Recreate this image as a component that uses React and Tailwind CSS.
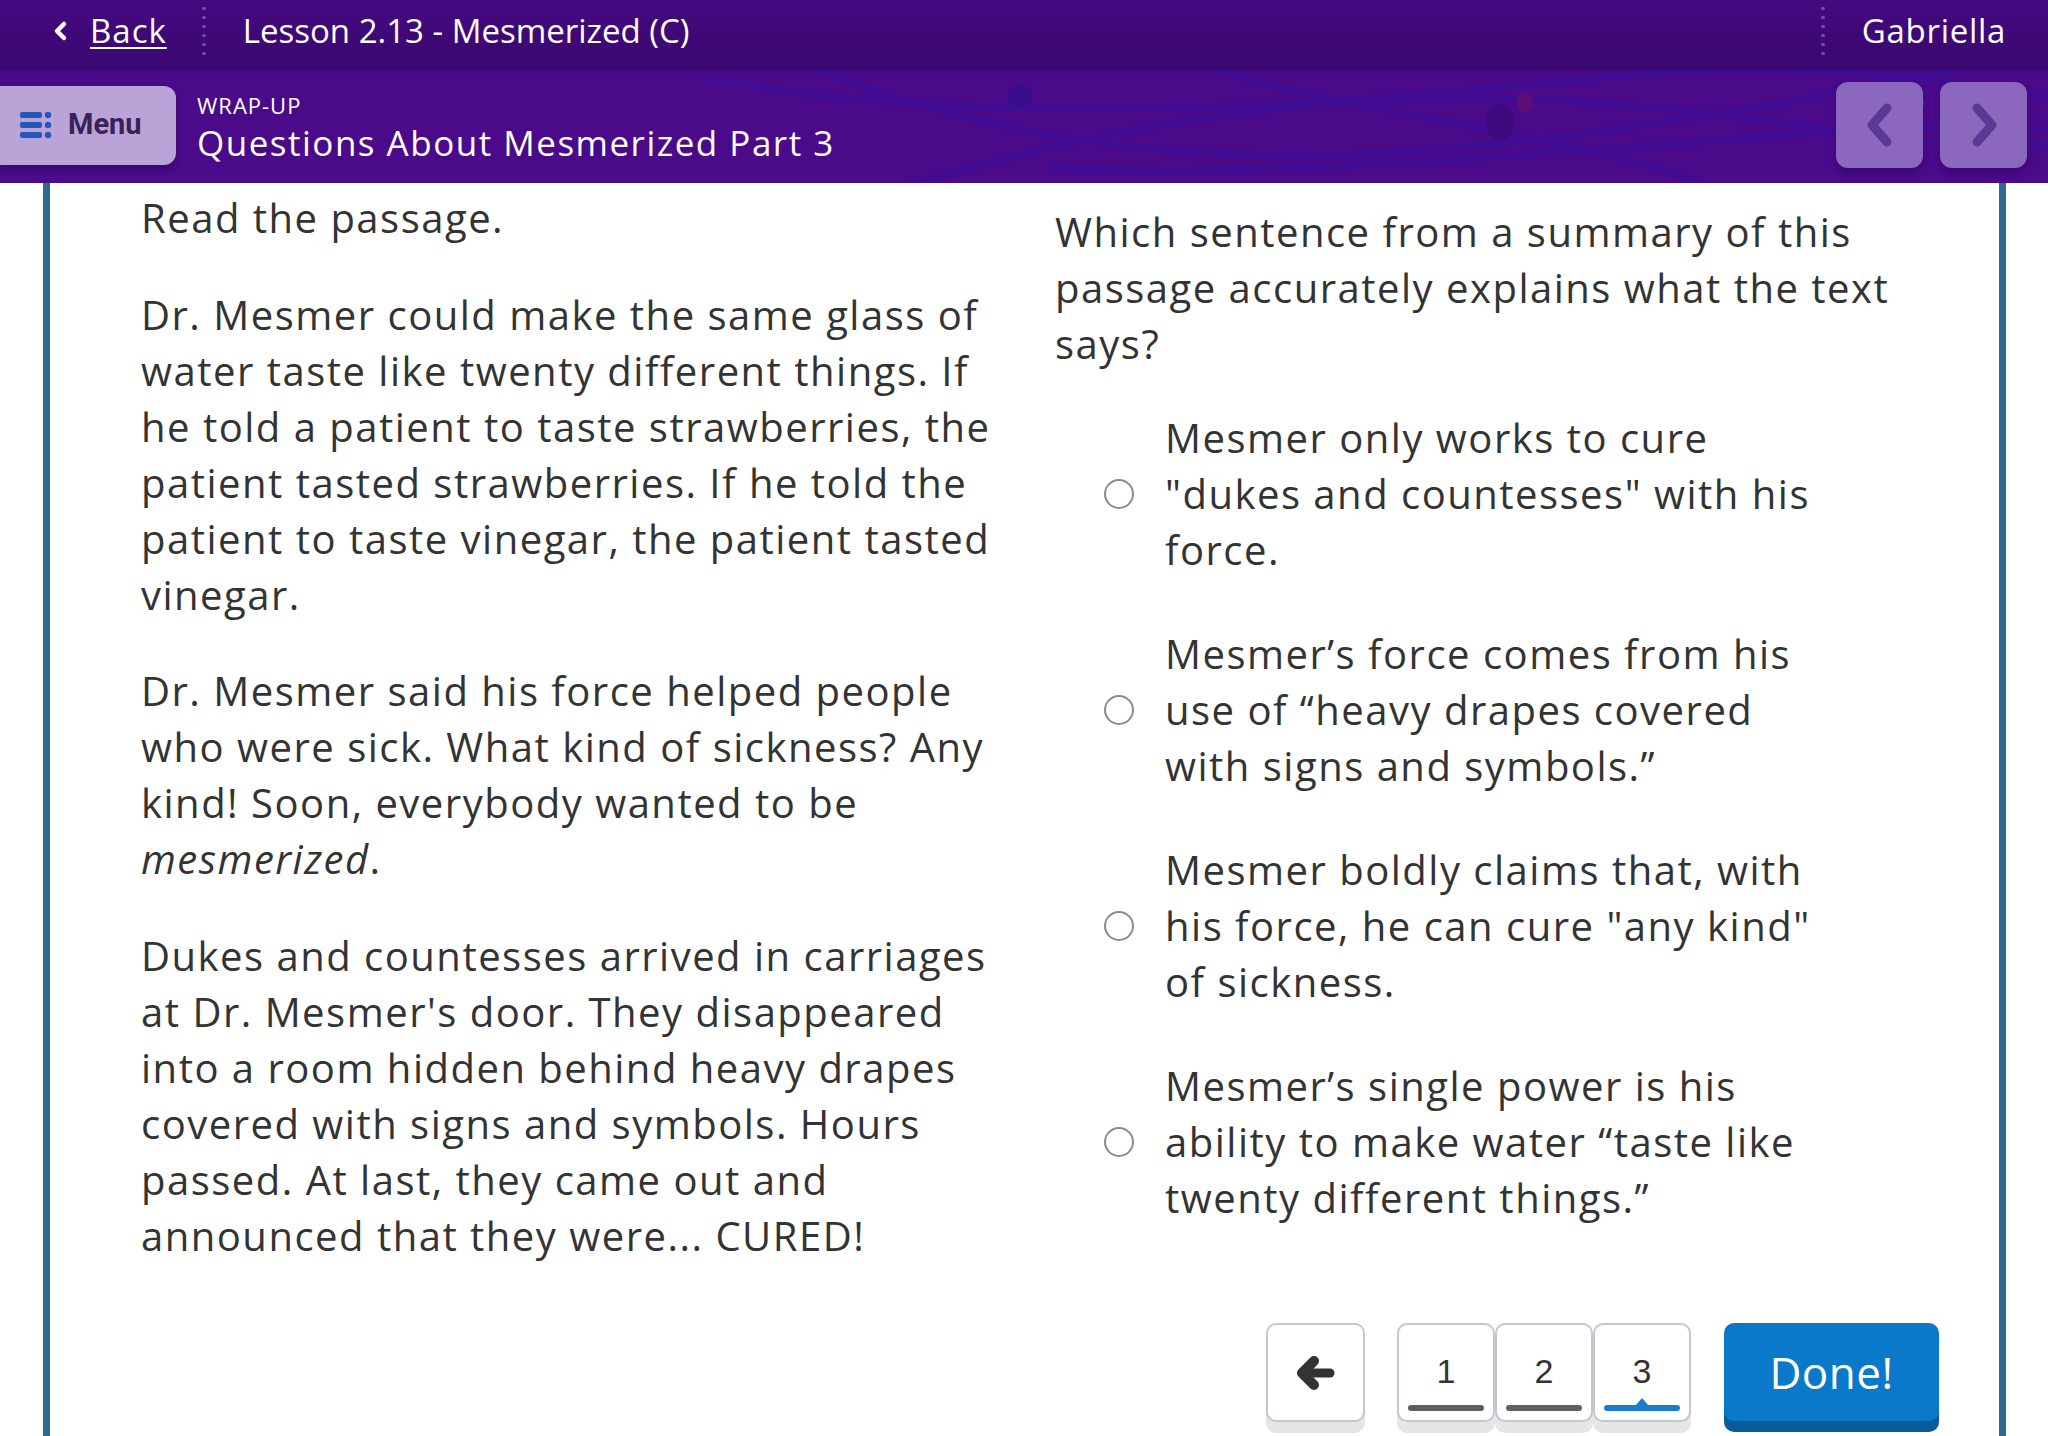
import React, { useState } from "react";

const choices = [
  "Mesmer only works to cure \"dukes and countesses\" with his force.",
  "Mesmer\u2019s force comes from his use of \u201Cheavy drapes covered with signs and symbols.\u201D",
  "Mesmer boldly claims that, with his force, he can cure \"any kind\" of sickness.",
  "Mesmer\u2019s single power is his ability to make water \u201Ctaste like twenty different things.\u201D",
];

const DottedRule = () => (
  <div className="flex flex-col justify-center gap-[6px] h-full">
    {[0, 1, 2, 3, 4, 5].map((i) => (
      <span key={i} className="block w-[4px] h-[4px] rounded-full bg-[#7150a8]" />
    ))}
  </div>
);

const MenuIcon = () => (
  <svg width="34" height="30" viewBox="0 0 34 30">
    <rect x="0" y="2" width="22" height="6" rx="2" fill="#2557b8" />
    <rect x="0" y="12" width="22" height="6" rx="2" fill="#2557b8" />
    <rect x="0" y="22" width="22" height="6" rx="2" fill="#2557b8" />
    <circle cx="28" cy="5" r="3.2" fill="#2557b8" />
    <circle cx="28" cy="15" r="3.2" fill="#2557b8" />
    <circle cx="28" cy="25" r="3.2" fill="#2557b8" />
  </svg>
);

const Chevron = ({ dir }) => (
  <svg width="34" height="46" viewBox="0 0 34 46">
    <path
      d={dir === "left" ? "M24 6 L9 23 L24 40" : "M10 6 L25 23 L10 40"}
      fill="none"
      stroke="#5b3996"
      strokeWidth="9"
      strokeLinecap="round"
      strokeLinejoin="round"
    />
  </svg>
);

const BackArrow = () => (
  <svg width="40" height="34" viewBox="0 0 40 34">
    <path d="M14 17 H34" fill="none" stroke="#333" strokeWidth="9" strokeLinecap="round" />
    <path d="M18 5 L6 17 L18 29" fill="none" stroke="#333" strokeWidth="10" strokeLinecap="round" strokeLinejoin="round" />
  </svg>
);

const Swirls = () => (
  <svg className="absolute inset-0 w-full h-full pointer-events-none" viewBox="0 0 2048 115" preserveAspectRatio="none">
    <g fill="none" stroke="#3e0e99" strokeWidth="7" opacity="0.7">
      <path d="M700 10 C 950 60, 1300 40, 1500 20 S 1800 -10, 2048 30" />
      <path d="M800 -5 C 1000 80, 1250 110, 1550 70 S 1850 20, 2000 -5" />
      <path d="M900 120 C 1100 60, 1350 10, 1650 40 S 1900 90, 2048 60" />
      <path d="M1050 100 C 1250 110, 1500 90, 1750 70 S 1950 60, 2048 80" />
      <path d="M1200 -5 C 1300 40, 1550 60, 1700 115" />
    </g>
    <circle cx="1020" cy="30" r="12" fill="#3a0d8c" />
    <ellipse cx="1500" cy="55" rx="14" ry="18" fill="#3e0b7e" />
    <ellipse cx="1525" cy="35" rx="8" ry="10" fill="#6a1268" opacity="0.6" />
    <ellipse cx="1915" cy="35" rx="9" ry="12" fill="#a0487a" opacity="0.5" />
  </svg>
);

const Radio = ({ checked, onClick }) => (
  <button
    onClick={onClick}
    className="w-[30px] h-[30px] shrink-0 rounded-full border-2 border-[#8c8c8c] bg-white flex items-center justify-center"
  >
    {checked && <span className="w-[16px] h-[16px] rounded-full bg-[#0b79ca]" />}
  </button>
);

const App = () => {
  const [selected, setSelected] = useState(null);
  const [page] = useState(3);

  return (
    <div className="min-h-[1436px] bg-white text-[#333] font-['Open_Sans',sans-serif]">
      {/* top bar */}
      <div className="h-[67px] bg-gradient-to-b from-[#44097f] to-[#3a0870] text-white flex items-center pb-[6px] shadow-[0_2px_4px_rgba(0,0,0,0.35)] relative z-10">
        <button className="flex items-center gap-[22px] pl-[53px] pr-[35px] h-full">
          <svg width="15" height="22" viewBox="0 0 15 22">
            <path d="M11 4 L4 11 L11 18" fill="none" stroke="white" strokeWidth="4.5" strokeLinecap="round" strokeLinejoin="round" />
          </svg>
          <span className="text-[33px] tracking-[1px] underline underline-offset-[4px] decoration-2">Back</span>
        </button>
        <div className="h-[48px]">
          <DottedRule />
        </div>
        <div className="pl-[37px] text-[33px]">Lesson 2.13 - Mesmerized (C)</div>
        <div className="flex-1" />
        <div className="h-[48px]">
          <DottedRule />
        </div>
        <div className="pl-[37px] pr-[42px] text-[33px] tracking-[0.7px]">Gabriella</div>
      </div>

      {/* lesson header */}
      <div className="h-[116px] bg-[#4a0a8a] relative flex items-center">
        <Swirls />
        <button className="relative h-[79px] w-[176px] rounded-r-[12px] bg-[#b9a3d7] flex items-center gap-[14px] pl-[20px] shadow-[0_4px_6px_rgba(30,0,60,0.35)]">
          <MenuIcon />
          <span className="font-['Roboto',sans-serif] font-bold text-[29px] text-[#3a2259]">Menu</span>
        </button>
        <div className="relative pl-[21px] pt-[4px] text-white leading-none">
          <div className="text-[22px] tracking-[1px] mb-[9px]">WRAP-UP</div>
          <div className="text-[35px] font-medium tracking-[1.5px]">Questions About Mesmerized Part 3</div>
        </div>
        <div className="flex-1" />
        <div className="relative flex gap-[17px] pr-[21px]">
          <button className="w-[87px] h-[86px] rounded-[12px] bg-[#8b68bd] flex items-center justify-center shadow-[0_4px_6px_rgba(30,0,60,0.35)]">
            <Chevron dir="left" />
          </button>
          <button className="w-[87px] h-[86px] rounded-[12px] bg-[#8b68bd] flex items-center justify-center shadow-[0_4px_6px_rgba(30,0,60,0.35)]">
            <Chevron dir="right" />
          </button>
        </div>
      </div>

      {/* body */}
      <div className="ml-[43px] mr-[42px] border-x-[7px] border-[#2f6a93] min-h-[1253px] flex flex-col">
        <div className="flex pl-[91px] pr-[60px] text-[40px] tracking-[1.5px] leading-[56px]">
          <div className="w-[850px] shrink-0 pt-[7px]">
            <p>Read the passage.</p>
            <p className="mt-[41px]">
              Dr. Mesmer could make the same glass of water taste like twenty different things. If he told a patient to taste strawberries, the patient tasted strawberries. If he told the patient to taste vinegar, the patient tasted vinegar.
            </p>
            <p className="mt-[40px]">
              Dr. Mesmer said his force helped people who were sick. What kind of sickness? Any kind! Soon, everybody wanted to be <em>mesmerized</em>.
            </p>
            <p className="mt-[41px]">
              Dukes and countesses arrived in carriages at Dr. Mesmer's door. They disappeared into a room hidden behind heavy drapes covered with signs and symbols. Hours passed. At last, they came out and announced that they were... CURED!
            </p>
          </div>
          <div className="flex-1 pl-[64px] pt-[21px]">
            <p>Which sentence from a summary of this passage accurately explains what the text says?</p>
            <div className="mt-[38px] flex flex-col gap-[48px] pl-[49px]">
              {choices.map((c, i) => (
                <label key={i} className="flex items-center gap-[31px] cursor-pointer">
                  <Radio checked={selected === i} onClick={() => setSelected(i)} />
                  <span className="w-[660px]">{c}</span>
                </label>
              ))}
            </div>
          </div>
        </div>

        <div className="mt-auto flex justify-end items-start pr-[60px] pb-[14px]">
          <button className="w-[99px] h-[99px] rounded-[10px] border-2 border-[#c3c7cf] bg-white flex items-center justify-center shadow-[0_11px_0_#e6e6e6]">
            <BackArrow />
          </button>
          <div className="flex ml-[32px]">
            {[1, 2, 3].map((n) => (
              <div
                key={n}
                className="w-[98px] h-[99px] rounded-[10px] border-2 border-[#c3c7cf] bg-white flex flex-col items-center justify-end pb-[9px] shadow-[0_11px_0_#e6e6e6]"
              >
                <span className="font-['Liberation_Sans',sans-serif] text-[34px] leading-none mb-[17px]">{n}</span>
                <div className="relative w-[76px] h-[6px]">
                  <span className={"block w-full h-full rounded-full " + (n === page ? "bg-[#1a7ccc]" : "bg-[#5e5e5e]")} />
                  {n === page && (
                    <span className="absolute left-1/2 -translate-x-1/2 -top-[7px] w-0 h-0 border-x-[7px] border-x-transparent border-b-[8px] border-b-[#1a7ccc]" />
                  )}
                </div>
              </div>
            ))}
          </div>
          <button className="ml-[33px] w-[215px] h-[98px] rounded-[10px] bg-[#0b79ca] text-white text-[44px] font-medium tracking-[0.5px] shadow-[0_11px_0_#085c98]">
            Done!
          </button>
        </div>
      </div>
    </div>
  );
};

export default App;
